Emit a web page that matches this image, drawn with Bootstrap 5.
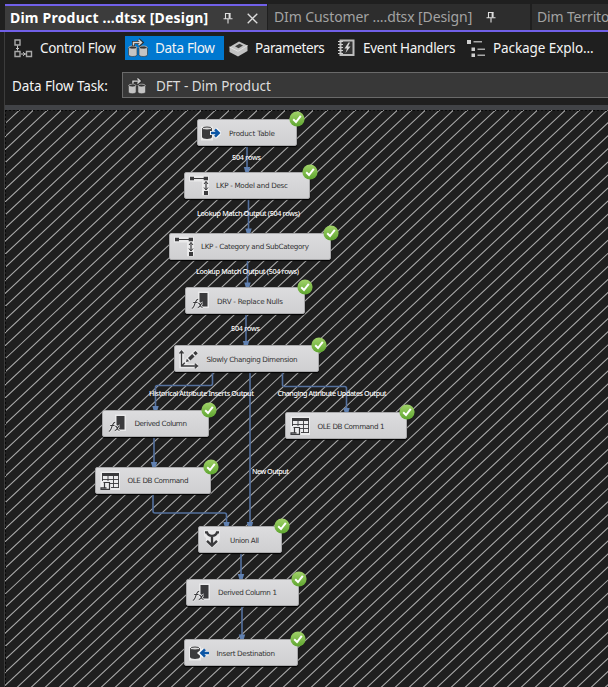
<!DOCTYPE html>
<html lang="en">
<head>
<meta charset="utf-8">
<meta name="viewport" content="width=device-width, initial-scale=1">
<title>Dim Product.dtsx [Design]</title>
<link href="https://cdn.jsdelivr.net/npm/bootstrap@5.3.0/dist/css/bootstrap.min.css" rel="stylesheet">
<style>
body{background:#1f1f1f;color:#f4f4f4;font-family:"Noto Sans","Open Sans",sans-serif;font-size:13.5px;line-height:20px;width:608px;height:687px}
svg{display:block;flex:none}
.doc-tabs{height:32px;padding:4px 0 0 5px;border-bottom:2px solid #7160e8}
.doc-tab{height:26px;background:#2d2d2d;color:#a3a3a3;font-size:14px;flex:none}
.doc-tab.current{width:262px;padding-left:5px;background:#3c3c3c;color:#fff;font-weight:700;border-top:2px solid #7160e8}
.doc-tab.other{width:262px;margin-left:1px;padding-left:6px}
.doc-tab.last{width:76px;margin-left:2px;padding-left:5px;letter-spacing:-.15px}
.t-a{width:199px;letter-spacing:.21px}.t-b{width:198px;letter-spacing:-.1px}
.pin-a{margin-left:14px}.close-a{margin-left:14px}.pin-b{margin-left:14px}
.pane{border-left:1px solid #3c3c3c;margin-left:4px;height:655px}
.tools{height:32px;padding-top:4px}
.tool{height:24px;gap:7px;flex:none}
.tool-cf{width:120px;padding-left:9px;letter-spacing:-.33px}
.tool-df{width:99px;padding-left:3px;letter-spacing:-.3px}
.tool-pa{width:107px;padding-left:5px;letter-spacing:-.4px}
.tool-eh{width:129px;padding-left:7px;gap:8px;letter-spacing:-.28px}
.tool-pe{padding-left:7px;letter-spacing:-.08px}
.tool.on{background:#0078d0}
.task-row{height:41px;padding-top:8px}
.task-name{width:117px;padding:4px 0 0 7px;letter-spacing:-.1px}
.combo{height:26px;padding:1px 0 0 5px;gap:10px;background:#383838;border:1px solid #6a6a6a;border-right:0;color:#dcdcdc}
.strip{height:5px;background:#414347}
.board{height:577px}
.nd{position:absolute;height:27px;background:linear-gradient(#dcdcde,#cfcfd1);border:1px solid #a9a9ab;border-radius:2px;box-shadow:0 1px 1px #000}
.nd .tick{position:absolute;right:-9px;top:-9px}
.nd text{font-family:"DejaVu Sans","Noto Sans",sans-serif;font-size:7.2px;fill:#333}
.edge-labels text{font-family:"Noto Sans",sans-serif;font-size:7.2px;font-weight:500;fill:#fff}
</style>
<script src="https://cdn.jsdelivr.net/npm/bootstrap@5.3.0/dist/js/bootstrap.bundle.min.js"></script>
</head>
<body class="overflow-hidden">
<svg width="0" height="0" class="position-absolute">
 <defs>
  <linearGradient id="gr" x1="0" y1="0" x2="0" y2="1"><stop offset="0" stop-color="#a2d36a"/><stop offset="1" stop-color="#5ea52f"/></linearGradient>
  <symbol id="tick" viewBox="0 0 16 16"><circle cx="8" cy="8" r="7.6" fill="url(#gr)"/><path d="M4.2 8.300 7 11 11.800 4.900" fill="none" stroke="#fff" stroke-width="2"/></symbol>
  <symbol id="src" viewBox="0 0 20 20"><path d="M0 3.500h12v3l3-2 5 5.500-5 6-3-2v3.500H0z" fill="#e9e9ea"/><path d="M1 5.500v8.500c0 2.600 10 2.600 10 0V5.500z" fill="#3a3a3c"/><ellipse cx="6" cy="5.500" rx="4.500" ry="1.500" fill="#d8d8d8" stroke="#3a3a3c"/><path d="M9 10h9M14.500 6.300 18.500 10l-4 3.700" fill="none" stroke="#f4f4f4" stroke-width="4"/><path d="M10 10h7.500M14 6.300 17.700 10 14 13.700" fill="none" stroke="#0b55a5" stroke-width="2.500"/></symbol>
  <symbol id="dst" viewBox="0 0 20 20"><path d="M0 3.500h12v3l8 2v4l-8 2V17.500H0z" fill="#e9e9ea"/><path d="M1 5.500V14c0 2.600 10 2.600 10 0V5.500z" fill="#3a3a3c"/><ellipse cx="6" cy="5.500" rx="4.500" ry="1.500" fill="#d8d8d8" stroke="#3a3a3c"/><path d="M20 10H12M15 6.500 11 10l4 3.500" fill="none" stroke="#f4f4f4" stroke-width="4"/><path d="M20 10H12.500M16 6.300 12.300 10l3.700 3.700" fill="none" stroke="#0b55a5" stroke-width="2.500"/></symbol>
  <symbol id="lkp" viewBox="0 0 20 20"><path d="M0 0h20v20H13V6H0z" fill="#e9e9ea"/><path d="M3 3h13M17 6v8" stroke="#3a3a3c" stroke-width="1.200"/><path d="M1 1.200h4v3.600H1zM14.700 1.200h4.300v3.600h-4.300zM15 15.600h4v4h-4z" fill="#3a3a3c"/><path d="m15 8.500 2-2.500 2 2.500M15 12l2 2.500 2-2.500" fill="none" stroke="#3a3a3c"/></symbol>
  <symbol id="drv" viewBox="0 0 20 20"><path d="M8 .5h11v16.500H8z" fill="#e9e9ea"/><path d="M9.500 2h8v13.500h-8z" fill="#3a3a3c"/><path d="M1.800 17.200c3 .5 2.800-9 6.400-9M3.200 11.500h4.300M8.200 12.300c2.500-.8 1.500 4.500 4.300 4.200M12.800 11.800c-2 0-2.500 4.800-5 4.800" fill="none" stroke="#e6e6e7" stroke-width="2.800"/><path d="M1.800 17.200c3 .5 2.800-9 6.400-9M3.200 11.500h4.300M8.200 12.300c2.500-.8 1.500 4.500 4.300 4.200M12.800 11.800c-2 0-2.500 4.800-5 4.800" fill="none" stroke="#3a3a3c" stroke-width="1.100"/></symbol>
  <symbol id="scd" viewBox="0 0 20 20"><path d="M2.500 1v16H19M3 16 18 2" fill="none" stroke="#e9e9ea" stroke-width="4.500"/><path d="M2.500 2v15H18M.5 4.500l2-2.500 2 2.500M15.800 14.800 18.500 17l-2.700 2.200M2.800 16.700l3-3" fill="none" stroke="#3a3a3c" stroke-width="1.300"/><path d="m7 13 .8-3.200 2.400 2.400zM9 9l4.200-4 2.400 2.400-4.200 4zM14.200 4l2.400-2 2.200 2.200-2.200 2.200z" fill="#3a3a3c"/></symbol>
  <symbol id="ole" viewBox="0 0 20 20"><path d="M.5.500H20v18.500H.5z" fill="#ececed"/><path d="M2 2h17v3H2z" fill="#3a3a3c"/><path d="M2.500 5v5M8 5v5M13.500 5v12M18.500 5v12M2 8.500h17M10 12.500h9M11 16.500h8" fill="none" stroke="#3a3a3c" stroke-width=".9"/><path d="M3.500 11.500h6.500M4.500 11.500v5M9.500 11.500V18.300H1v-1.500h5.500" fill="none" stroke="#3a3a3c" stroke-width="1.200"/></symbol>
  <symbol id="uni" viewBox="0 0 20 20"><path d="M2 1h16v8l-1 4-7 6-6-6V9L2 7z" fill="#e9e9ea"/><path d="M3 3.300h2c1 3 3 3.500 5 3.500s4-.5 5-3.500h2M10 6v10.500M5 11.800l5 4.800 5-4.800" fill="none" stroke="#3a3a3c" stroke-width="2.300"/></symbol>
  <symbol id="flow" viewBox="0 0 20 20"><path d="M.5 9.500v7.200c0 2.400 8.500 2.400 8.500 0V9.500zM11 9.500v7.200c0 2.400 8.500 2.400 8.500 0V9.500z" fill="#c4c4c4" stroke="#2c2c2c" stroke-width=".6"/><path d="M.8 9.500c0-2 8-2 8 0s-8 2-8 0zM11.200 9.500c0-2 8-2 8 0s-8 2-8 0z" fill="#333" stroke="#c9c9c9" stroke-width=".8"/><path d="M5.500 8V4.500H14M10.500 1.500l3.500 3-3.500 3" fill="none" stroke="#2c2c2c" stroke-width="3"/><path d="M5.500 7.500V4.500H13M10.500 1.800l3 2.700-3 2.700" fill="none" stroke="#d6d6d6" stroke-width="1.500"/></symbol>
  <symbol id="pin" viewBox="0 0 10 12"><path d="M2.500 1v5.500M2 1.500h5.500M.5 6.800h9M5 7v4.500" fill="none" stroke="#dedede" stroke-width="1.100"/><path d="M5.600 1.500h2v5h-2z" fill="#dedede"/></symbol>
 </defs>
</svg>

<nav class="doc-tabs d-flex">
 <div class="doc-tab current d-flex align-items-center"><span class="t-a text-nowrap">Dim Product ...dtsx [Design]</span><svg class="pin-a" width="10" height="12"><use href="#pin"/></svg><svg class="close-a" width="11" height="11" viewBox="0 0 11 11"><path d="m.7.700 9.600 9.600m0-9.600L.7 10.300" stroke="#dedede" stroke-width="1.300"/></svg></div>
 <div class="doc-tab other d-flex align-items-center"><span class="t-b text-nowrap">DIm Customer ....dtsx [Design]</span><svg class="pin-b" width="10" height="12"><use href="#pin"/></svg></div>
 <div class="doc-tab last d-flex align-items-center text-nowrap">Dim Territo</div>
</nav>

<main class="pane">
 <div class="tools d-flex text-nowrap">
  <div class="tool tool-cf d-flex align-items-center"><svg width="19" height="19" viewBox="0 0 19 19"><path d="M1 1h5v5H1zM1 12.500h5v5H1zM12.500 12.500h5v5h-5z" fill="none" stroke="#a9a9a9" stroke-width="1.400"/><path d="M3.500 6.500v5M2 9.500h3M7 15h5M9 13.200l2 1.800-2 1.800" fill="none" stroke="#c4c4c4"/></svg><span>Control Flow</span></div>
  <div class="tool tool-df on d-flex align-items-center"><svg width="20" height="20"><use href="#flow"/></svg><span>Data Flow</span></div>
  <div class="tool tool-pa d-flex align-items-center"><svg width="19" height="17" viewBox="0 0 19 17"><path d="M.5 7 10 1.500l8.500 4v5.500L9 16.500.5 12z" fill="#c2c2c2"/><path d="m.5 7 8.500 4.300 9.500-5.800" fill="none" stroke="#e0e0e0"/><path d="M6 6.300 10.500 3.800l3.500 1.700-4.500 2.700z" fill="#3c3c3c"/></svg><span>Parameters</span></div>
  <div class="tool tool-eh d-flex align-items-center"><svg width="17" height="18" viewBox="0 0 17 18"><path d="M2.500 1.500h13v14.500h-13z" fill="#333" stroke="#bdbdbd" stroke-width="2"/><path d="M0 2.500h5M0 5.500h5M0 8.500h5M0 11.500h5M0 14.500h5" stroke="#d0d0d0"/><path d="M10.500 3.500 6.500 9.500h2.500L7.500 14l5-6.500H10l2-4z" fill="#d8d8d8"/></svg><span>Event Handlers</span></div>
  <div class="tool tool-pe d-flex align-items-center"><svg width="19" height="19" viewBox="0 0 19 19"><path d="M0 1h4v4H0zM4.500 8.500h3.500v3.500H4.500zM4.500 14.500h3.500V18H4.500z" fill="#cfcfcf"/><path d="M6.500 2.800H15M10.500 10.300H18M10.500 16.300H18" stroke="#a9a9a9" stroke-width="1.500"/></svg><span>Package Explo...</span></div>
 </div>
 <div class="task-row d-flex text-nowrap align-items-start">
  <span class="task-name">Data Flow Task:</span>
  <div class="combo d-flex align-items-center flex-fill"><svg width="18" height="18" viewBox="0 0 20 20"><use href="#flow"/></svg><span>DFT - Dim Product</span></div>
 </div>
 <div class="strip"></div>
 <div class="board position-relative">
  <svg class="edge-labels position-absolute top-0 start-0" width="603" height="577" viewBox="5 110 603 577">
   <path id="hatch" fill="none" stroke="#aaa" stroke-width="1.080"/>
   <path d="M5 110.500h603M5.500 110v577" stroke="#080808" stroke-dasharray="2 2"/>
   <g fill="none" stroke="#54719f" stroke-width="1.600">
    <path d="M247 146v24M248.500 198v34M247.500 259v27M246 314v30M250 372v153M154 437v28M241 553v24M242 605v32"/>
    <path d="M212.500 372v11.500q0 2-2 2h-53q-2 0-2 2V409M282.500 372v12.500q0 2 2 2h60q2 0 2 2V411M153 493v18q0 2 2 2h69.500q2 0 2 2V525"/>
   </g>
   <path fill="#6080b0" d="M243.800 167h6.400l-1.500 5h-3.400zM245.300 228.500h6.400l-1.500 5h-3.400zM244.300 282.500h6.400l-1.500 5h-3.400zM242.800 341h6.400l-1.500 5h-3.400zM152.300 406h6.400l-1.500 5h-3.400zM343.300 408h6.400l-1.500 5h-3.400zM150.800 462h6.400l-1.500 5h-3.400zM223.300 522h6.400l-1.500 5h-3.400zM246.800 522h6.400l-1.500 5h-3.400zM237.800 574h6.400l-1.500 5h-3.400zM238.800 634.500h6.400l-1.500 5h-3.400z"/>
   <text x="232" y="160" textLength="29">504 rows</text>
   <text x="197" y="216" textLength="103">Lookup Match Output (504 rows)</text>
   <text x="196" y="274" textLength="103">Lookup Match Output (504 rows)</text>
   <text x="231" y="331" textLength="29">504 rows</text>
   <text x="149" y="396" textLength="105">Historical Attribute Inserts Output</text>
   <text x="277.500" y="396" textLength="109">Changing Attribute Updates Output</text>
   <text x="252" y="474" textLength="37">New Output</text>
  </svg>
  <div class="nd" style="left:192px;top:9px;width:100px"><svg width="98" height="25"><use href="#src" x="3" y="3" width="20" height="20"/><text x="31" y="15.500" textLength="46">Product Table</text></svg><svg class="tick" width="16" height="16"><use href="#tick"/></svg></div>
  <div class="nd" style="left:179px;top:62px;width:126px"><svg width="124" height="25"><use href="#lkp" x="4" y="2.500" width="20" height="20"/><text x="31" y="15" textLength="72">LKP - Model and Desc</text></svg><svg class="tick" width="16" height="16"><use href="#tick"/></svg></div>
  <div class="nd" style="left:164px;top:123px;width:162px"><svg width="160" height="25"><use href="#lkp" x="4" y="2.500" width="20" height="20"/><text x="31" y="15" textLength="108">LKP - Category and SubCategory</text></svg><svg class="tick" width="16" height="16"><use href="#tick"/></svg></div>
  <div class="nd" style="left:180px;top:177px;width:120px"><svg width="118" height="25"><use href="#drv" x="4" y="3" width="20" height="20"/><text x="31" y="15.500" textLength="66">DRV - Replace Nulls</text></svg><svg class="tick" width="16" height="16"><use href="#tick"/></svg></div>
  <div class="nd" style="left:169px;top:235px;width:145px"><svg width="143" height="25"><use href="#scd" x="4" y="3" width="20" height="20"/><text x="31.500" y="15.500" textLength="91">Slowly Changing Dimension</text></svg><svg class="tick" width="16" height="16"><use href="#tick"/></svg></div>
  <div class="nd" style="left:97px;top:300px;width:107px"><svg width="105" height="25"><use href="#drv" x="4" y="3" width="20" height="20"/><text x="31.500" y="15" textLength="52.500">Derived Column</text></svg><svg class="tick" width="16" height="16"><use href="#tick"/></svg></div>
  <div class="nd" style="left:90px;top:357px;width:116px"><svg width="114" height="25"><use href="#ole" x="4" y="3" width="20" height="20"/><text x="31.500" y="15" textLength="61">OLE DB Command</text></svg><svg class="tick" width="16" height="16"><use href="#tick"/></svg></div>
  <div class="nd" style="left:280px;top:302px;width:122px"><svg width="120" height="25"><use href="#ole" x="4" y="3" width="20" height="20"/><text x="31.500" y="15.500" textLength="67">OLE DB Command 1</text></svg><svg class="tick" width="16" height="16"><use href="#tick"/></svg></div>
  <div class="nd" style="left:193px;top:416px;width:84px"><svg width="82" height="25"><use href="#uni" x="3" y="2" width="20" height="20"/><text x="31" y="15.500" textLength="29">Union All</text></svg><svg class="tick" width="16" height="16"><use href="#tick"/></svg></div>
  <div class="nd" style="left:181px;top:469px;width:113px"><svg width="111" height="25"><use href="#drv" x="4" y="3" width="20" height="20"/><text x="31" y="15" textLength="59">Derived Column 1</text></svg><svg class="tick" width="16" height="16"><use href="#tick"/></svg></div>
  <div class="nd" style="left:179px;top:529px;width:114px"><svg width="112" height="25"><use href="#dst" x="4" y="3" width="20" height="20"/><text x="31.500" y="15.500" textLength="58.500">Insert Destination</text></svg><svg class="tick" width="16" height="16"><use href="#tick"/></svg></div>
 </div>
</main>
<script>
// Diagonal hatching: one line every 14px across the board
let d = '';
for (let k = -36; k < 60; k++) {
  const x = 17.7 + 14 * k;
  d += `M${(x + 450).toFixed(1)} 109.900L${(x - 171.4).toFixed(1)} 690`;
}
document.getElementById('hatch').setAttribute('d', d);
</script>
</body>
</html>
